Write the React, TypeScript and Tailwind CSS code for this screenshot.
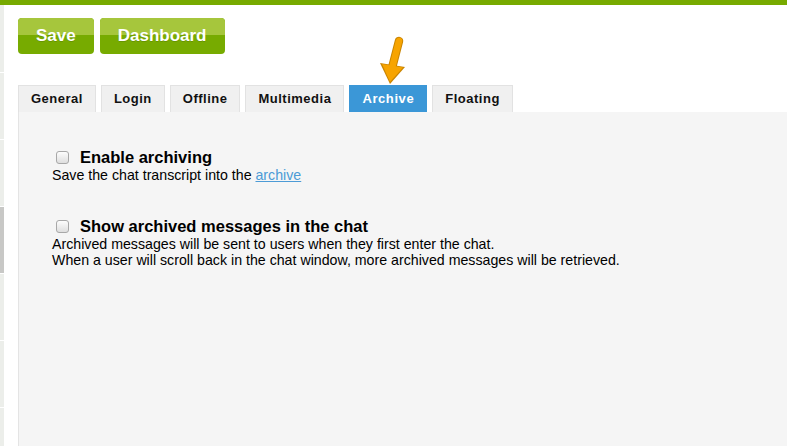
import React from 'react'

const tabs = ['General', 'Login', 'Offline', 'Multimedia', 'Archive', 'Floating']

const Checkbox = () => (
  <span className="inline-block w-[13px] h-[13px] rounded-[3px] border border-[#a8a8a8] bg-gradient-to-b from-[#fdfdfd] to-[#dedede] shrink-0" />
)

const GreenButton = ({ label }: { label: string }) => (
  <button className="relative h-[36px] px-[18px] rounded-[4px] overflow-hidden text-white font-bold text-[17px] bg-[#77ab00] cursor-pointer">
    <span className="absolute left-0 top-0 w-full h-[17px] bg-[#a6c63c]"></span>
    <span className="relative [text-shadow:0_1px_0_rgba(0,0,0,0.15)]">{label}</span>
  </button>
)

export default function App() {
  return (
    <div className="relative w-[787px] h-[446px] overflow-hidden bg-white font-['Liberation_Sans',Arial,sans-serif] text-black">
      <div className="h-[5px] bg-[#77aa00]"></div>
      <div className="flex h-[441px]">
        {/* sidebar edge */}
        <div className="w-[4px] flex flex-col gap-[1px] bg-white">
          <div className="h-[67px] bg-[#eceeea]"></div>
          <div className="h-[66px] bg-[#eceeea]"></div>
          <div className="h-[66px] bg-[#eceeea]"></div>
          <div className="h-[66px] bg-[#c8c8c6]"></div>
          <div className="h-[66px] bg-[#eceeea]"></div>
          <div className="h-[66px] bg-[#eceeea]"></div>
          <div className="flex-1 bg-[#eceeea]"></div>
        </div>
        <div className="flex-1 flex flex-col pl-[14px] pt-[13px]">
          <div className="flex gap-[6px]">
            <GreenButton label="Save" />
            <GreenButton label="Dashboard" />
          </div>
          <div className="flex gap-[5px] mt-[31px]">
            {tabs.map((t) => (
              <div
                key={t}
                className={
                  t === 'Archive'
                    ? 'h-[27px] px-[12px] flex items-center text-[13px] tracking-[0.6px] font-bold text-white bg-[#3b97d7] border border-[#3b97d7] border-b-0'
                    : 'h-[27px] px-[12px] flex items-center text-[13px] tracking-[0.5px] font-bold text-[#111] bg-[#f0f0f0] border border-[#e2e2e2] border-b-0'
                }
              >
                {t}
              </div>
            ))}
          </div>
          <div className="flex-1 bg-[#f5f5f5] border-l border-[#e4e4e4] pl-[33px] pt-[36px]">
            <div className="flex items-center gap-[11px] ml-[4px] h-[18px]">
              <Checkbox />
              <span className="text-[16.5px] font-bold">Enable archiving</span>
            </div>
            <p className="text-[14.2px] leading-[16px] mt-[1px]">
              Save the chat transcript into the{' '}
              <a href="#" className="text-[#4c9bd6] underline">archive</a>
            </p>
            <div className="flex items-center gap-[11px] ml-[4px] h-[18px] mt-[34px]">
              <Checkbox />
              <span className="text-[16.5px] font-bold">Show archived messages in the chat</span>
            </div>
            <p className="text-[14.2px] leading-[16px] mt-[1px]">
              Archived messages will be sent to users when they first enter the chat.
              <br />
              When a user will scroll back in the chat window, more archived messages will be retrieved.
            </p>
          </div>
        </div>
      </div>
      <svg className="absolute left-[378px] top-[34px]" width="32" height="54" viewBox="378 34 32 54">
        <line x1="399" y1="41" x2="392" y2="68" stroke="#c98400" strokeWidth="8.5" strokeLinecap="round" />
        <polygon points="380,63 405,67 390,84" fill="#c98400" />
        <line x1="399" y1="41" x2="392" y2="68" stroke="#f7a400" strokeWidth="6.5" strokeLinecap="round" />
        <polygon points="382,64 403,67.5 390,82" fill="#f7a400" />
      </svg>
    </div>
  )
}
